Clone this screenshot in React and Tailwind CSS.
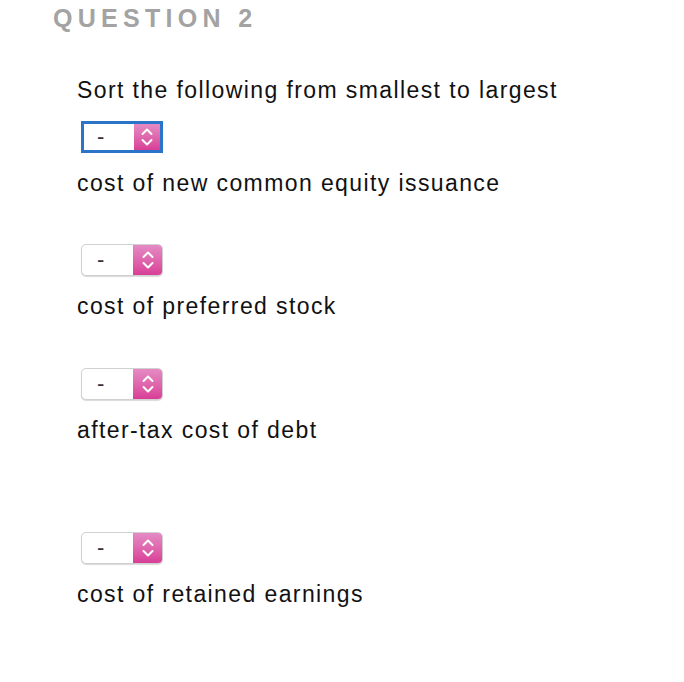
import React from "react";

function Chevrons() {
  return (
    <svg width="12" height="22" viewBox="0 0 12 22" fill="none">
      <path d="M1.5 8 L6 3.5 L10.5 8" stroke="white" strokeWidth="2" strokeLinecap="round" strokeLinejoin="round" />
      <path d="M1.5 14 L6 18.5 L10.5 14" stroke="white" strokeWidth="2" strokeLinecap="round" strokeLinejoin="round" />
    </svg>
  );
}

function Select({ focused }) {
  if (focused) {
    return (
      <div className="ml-[4px] flex h-[32px] w-[82px] border-[3px] border-[#2c74c9] bg-white">
        <div className="flex flex-1 items-center pl-[13px] text-[22px] leading-none tracking-normal text-[#333]">-</div>
        <div className="flex w-[26px] items-center justify-center bg-gradient-to-b from-[#e48ac4] to-[#d83d97]">
          <Chevrons />
        </div>
      </div>
    );
  }
  return (
    <div className="ml-[4px] flex h-[32px] w-[82px] overflow-hidden rounded-[5px] border border-[#d0d0d0] bg-white shadow-[0_1px_1px_rgba(0,0,0,0.15)]">
      <div className="flex flex-1 items-center pl-[15px] text-[22px] leading-none tracking-normal text-[#333]">-</div>
      <div className="flex w-[29px] items-center justify-center bg-gradient-to-b from-[#e48ac4] to-[#d83d97]">
        <Chevrons />
      </div>
    </div>
  );
}

export default function App() {
  return (
    <div
      className="min-h-[682px] w-[684px] bg-white pl-[53px] pt-[2px]"
      style={{ fontFamily: '"Liberation Sans", Arial, sans-serif' }}
    >
      <div className="text-[25px] font-bold leading-[32px] tracking-[5.3px] text-[#a3a3a3]">QUESTION 2</div>
      <div className="pl-[24px] text-[23px] leading-[28px] tracking-[1.4px] text-[#111]">
        <div className="mt-[42px]">Sort the following from smallest to largest</div>
        <div className="mt-[17px]"><Select focused /></div>
        <div className="mt-[16px]">cost of new common equity issuance</div>
        <div className="mt-[47px]"><Select /></div>
        <div className="mt-[16px]">cost of preferred stock</div>
        <div className="mt-[48px]"><Select /></div>
        <div className="mt-[16px]">after-tax cost of debt</div>
        <div className="mt-[88px]"><Select /></div>
        <div className="mt-[16px]">cost of retained earnings</div>
      </div>
    </div>
  );
}
